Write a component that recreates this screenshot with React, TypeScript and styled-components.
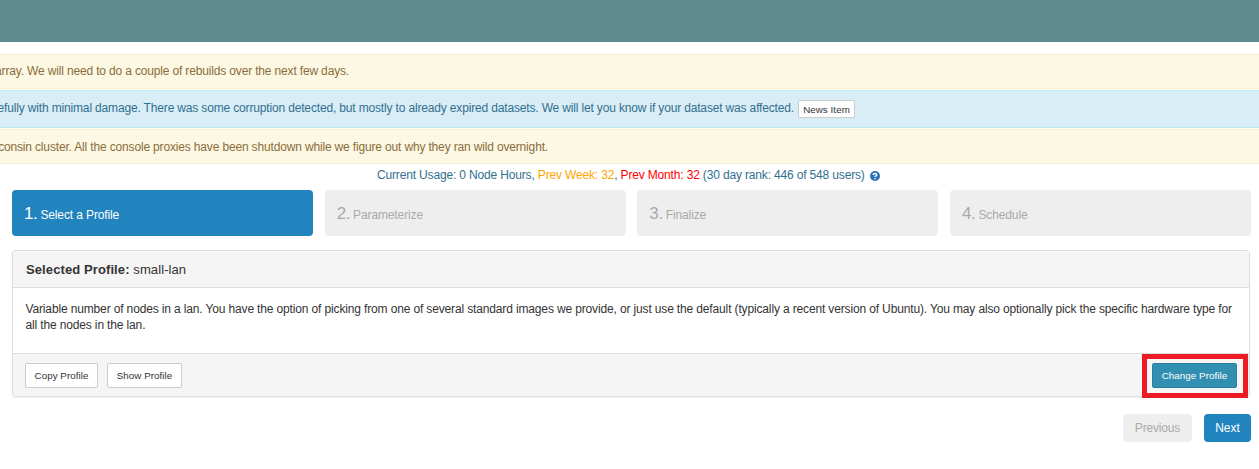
import React from "react";
import styled, { createGlobalStyle, css } from "styled-components";

const GlobalStyle = createGlobalStyle`
  * { box-sizing: border-box; }
  body {
    margin: 0;
    background: #fff;
    color: #333;
    font-family: "Liberation Sans", Arial, sans-serif;
    font-size: 12px;
    line-height: 16px;
    letter-spacing: -0.16px;
    overflow: hidden;
  }
`;

const Page = styled.div`
  width: 1259px;
  height: 469px;
  overflow: hidden;
`;

const TopBar = styled.header`
  height: 42px;
  background: #5f8a8f;
`;

const Alerts = styled.section`
  display: flex;
  flex-direction: column;
  gap: 1px;
  padding-top: 12px;
`;

const Alert = styled.div<{ $tone: "warning" | "info" }>`
  display: flex;
  align-items: center;
  gap: 4px;
  height: ${(p) => (p.$tone === "info" ? 38 : 35)}px;
  border-top: 1px solid;
  border-bottom: 1px solid;
  ${(p) =>
    p.$tone === "info"
      ? css`
          background: #d9edf7;
          border-color: #bce8f1;
          color: #31708f;
        `
      : css`
          background: #fcf8e3;
          border-color: #faebcc;
          color: #8a6d3b;
        `}
`;

const AlertText = styled.div<{ $width: number; $raised?: boolean }>`
  display: flex;
  justify-content: flex-end;
  width: ${(p) => p.$width}px;
  padding-bottom: ${(p) => (p.$raised ? 2 : 0)}px;
  overflow: hidden;
  white-space: nowrap;
`;

const Usage = styled.div`
  display: flex;
  align-items: center;
  height: 26px;
  padding: 0 0 4px 377px;
  color: #31708f;
  white-space: pre;
`;

const Amount = styled.span<{ $color: string }>`
  color: ${(p) => p.$color};
`;

const HelpIcon = styled.svg`
  width: 10px;
  height: 10px;
  margin: 2px 0 0 5.5px;
`;

const Steps = styled.ol`
  display: grid;
  grid-template-columns: repeat(4, 1fr);
  gap: 11.7px;
  margin: 0;
  padding: 0 8px 0 12px;
  list-style: none;
`;

const Step = styled.li<{ $active?: boolean }>`
  display: flex;
  align-items: baseline;
  gap: 3px;
  height: 46px;
  padding: 13.5px 12px 12px;
  border-radius: 4px;
  background: ${(p) => (p.$active ? "#2184be" : "#eee")};
  color: ${(p) => (p.$active ? "#fff" : "#aaa")};
  line-height: 20px;
  letter-spacing: -0.12px;
`;

const StepNumber = styled.span`
  font-size: 17px;
  letter-spacing: -0.4px;
`;

const Panel = styled.section`
  width: 1238px;
  margin: 14px 0 0 12px;
  border: 1px solid #ddd;
  border-radius: 3px;
  box-shadow: 0 1px 1px rgba(0, 0, 0, 0.05);
`;

const PanelHeading = styled.h3`
  height: 37px;
  margin: 0;
  padding: 11px 13px 9px;
  border-bottom: 1px solid #ddd;
  background: #f5f5f5;
  font-size: 13px;
  font-weight: 400;
  letter-spacing: 0.1px;
`;

const PanelBody = styled.div`
  height: 65px;
  padding: 13px 12.5px;
  letter-spacing: -0.144px;
  white-space: nowrap;
`;

const PanelFooter = styled.footer`
  display: flex;
  align-items: flex-start;
  height: 43px;
  padding: 9px 0 0 12px;
  gap: 9px;
  border-top: 1px solid #ddd;
  background: #f5f5f5;
`;

const Button = styled.button<{ $width: number; $primary?: boolean; $small?: boolean }>`
  width: ${(p) => p.$width}px;
  height: ${(p) => (p.$small ? 18 : 25)}px;
  padding: ${(p) => (p.$small ? 2 : 0)}px 0 0;
  border: 1px solid ${(p) => (p.$primary ? "#287e9b" : "#ccc")};
  border-radius: 2px;
  background: ${(p) => (p.$primary ? "#3190b1" : "#fff")};
  color: ${(p) => (p.$primary ? "#fff" : "#333")};
  font: 9.8px/14px "Liberation Sans", Arial, sans-serif;
  letter-spacing: 0.05px;
  white-space: nowrap;
`;

const Highlight = styled.div`
  width: 106px;
  height: 44px;
  margin: -9px 1px 0 auto;
  padding: 4px 5px;
  border: 5px solid #ed1c24;
`;

const Pager = styled.nav`
  display: flex;
  justify-content: flex-end;
  gap: 12px;
  padding: 17px 8px 0 0;
`;

const PagerButton = styled.button<{ $width: number; $active?: boolean }>`
  width: ${(p) => p.$width}px;
  height: 28px;
  padding: 0;
  border: 0;
  border-radius: 4px;
  background: ${(p) => (p.$active ? "#2184be" : "#eee")};
  color: ${(p) => (p.$active ? "#fff" : "#aaa")};
  font: 12px/16px "Liberation Sans", Arial, sans-serif;
  letter-spacing: ${(p) => (p.$active ? 0 : -0.16)}px;
`;

const steps = ["Select a Profile", "Parameterize", "Finalize", "Schedule"];

export default function App() {
  return (
    <Page>
      <GlobalStyle />
      <TopBar />
      <Alerts>
        <Alert $tone="warning">
          <AlertText $width={349} $raised>
            <span>array. We will need to do a couple of rebuilds over the next few days.</span>
          </AlertText>
        </Alert>
        <Alert $tone="info">
          <AlertText $width={794} $raised>
            <span>
              efully with minimal damage. There was some corruption detected, but mostly to already
              expired datasets. We will let you know if your dataset was affected.
            </span>
          </AlertText>
          <Button $width={57} $small>News Item</Button>
        </Alert>
        <Alert $tone="warning">
          <AlertText $width={548}>
            <span>
              consin cluster. All the console proxies have been shutdown while we figure out why they
              ran wild overnight.
            </span>
          </AlertText>
        </Alert>
      </Alerts>
      <Usage>
        <span>Current Usage: 0 Node Hours, </span>
        <Amount $color="orange">Prev Week: 32</Amount>
        <span>, </span>
        <Amount $color="red">Prev Month: 32</Amount>
        <span> (30 day rank: 446 of 548 users)</span>
        <HelpIcon viewBox="0 0 10 10">
          <circle cx="5" cy="5" r="5" fill="#2a72b5" />
          <path d="M3.2 3.9C3.2 2 6.8 2 6.8 3.9C6.8 5 5 4.9 5 6.1M5 7v1.2" fill="none" stroke="#fff" strokeWidth="1.4" />
        </HelpIcon>
      </Usage>
      <Steps>
        {steps.map((label, i) => (
          <Step key={label} $active={i === 0}>
            <StepNumber>{i + 1}.</StepNumber>
            <span>{label}</span>
          </Step>
        ))}
      </Steps>
      <Panel>
        <PanelHeading>
          <b>Selected Profile:</b> small-lan
        </PanelHeading>
        <PanelBody>
          Variable number of nodes in a lan. You have the option of picking from one of several standard
          images we provide, or just use the default (typically a recent version of Ubuntu). You may also
          optionally pick the specific hardware type for
          <br />
          all the nodes in the lan.
        </PanelBody>
        <PanelFooter>
          <Button $width={73}>Copy Profile</Button>
          <Button $width={75}>Show Profile</Button>
          <Highlight>
            <Button $width={85} $primary>Change Profile</Button>
          </Highlight>
        </PanelFooter>
      </Panel>
      <Pager>
        <PagerButton $width={69}>Previous</PagerButton>
        <PagerButton $width={47} $active>Next</PagerButton>
      </Pager>
    </Page>
  );
}
